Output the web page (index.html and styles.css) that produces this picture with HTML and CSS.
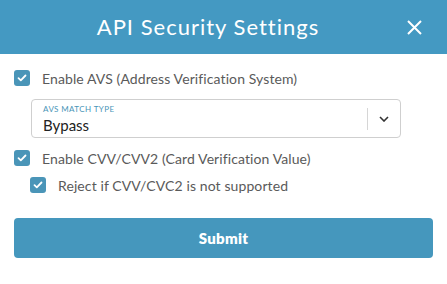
FILE: index.html
```html
<!DOCTYPE html>
<html>
<head>
<meta charset="utf-8">
<link rel="stylesheet" href="styles.css">
</head>
<body>
<div class="modal">
  <div class="header">
    <div class="title">API Security Settings</div>
    <button class="close" aria-label="Close">
      <svg width="15" height="15" viewBox="0 0 15 15"><path d="M1 1L14 14M14 1L1 14" stroke="#fff" stroke-width="2" fill="none"/></svg>
    </button>
  </div>
  <div class="body">
    <label class="check">
      <span class="box"><svg width="10" height="8" viewBox="0 0 10 8"><path d="M1.5 4.2L3.8 6.3L8.5 1.5" stroke="#fff" stroke-width="1.8" fill="none" stroke-linecap="round" stroke-linejoin="round"/></svg></span>
      <span class="label">Enable AVS (Address Verification System)</span>
    </label>
    <div class="select">
      <div class="select-value">
        <div class="select-label">AVS MATCH TYPE</div>
        <div class="select-text">Bypass</div>
      </div>
      <div class="divider"></div>
      <div class="chevron"><svg width="10" height="6" viewBox="0 0 10 6"><path d="M1 1L5 5L9 1" stroke="#333" stroke-width="1.6" fill="none"/></svg></div>
    </div>
    <label class="check">
      <span class="box"><svg width="10" height="8" viewBox="0 0 10 8"><path d="M1.5 4.2L3.8 6.3L8.5 1.5" stroke="#fff" stroke-width="1.8" fill="none" stroke-linecap="round" stroke-linejoin="round"/></svg></span>
      <span class="label">Enable CVV/CVV2 (Card Verification Value)</span>
    </label>
    <label class="check sub">
      <span class="box"><svg width="10" height="8" viewBox="0 0 10 8"><path d="M1.5 4.2L3.8 6.3L8.5 1.5" stroke="#fff" stroke-width="1.8" fill="none" stroke-linecap="round" stroke-linejoin="round"/></svg></span>
      <span class="label">Reject if CVV/CVC2 is not supported</span>
    </label>
    <button class="submit">Submit</button>
  </div>
</div>
</body>
</html>
```
FILE: styles.css
```css
* { box-sizing: border-box; }
html, body { margin: 0; padding: 0; background: #fff; }
body { font-family: "Lato", "Noto Sans", sans-serif; color: #555; }
.modal { width: 447px; }
.header {
  height: 54px;
  background: #4499c2;
  display: flex;
  align-items: center;
  padding: 0 25px 0 14px;
}
.title {
  flex: 1;
  text-align: center;
  color: #fff;
  font-size: 22px;
  letter-spacing: 1px;
  padding-bottom: 1px;
}
.close {
  width: 20px;
  height: 30px;
  border: 0;
  background: none;
  padding: 0;
  display: flex;
  align-items: center;
  justify-content: flex-end;
}
.body { padding: 16px 14px 0 14px; display: flex; flex-direction: column; }
.check { display: flex; align-items: center; gap: 12px; height: 16px; }
.check.sub { margin-left: 16px; margin-top: 11px; }
.box {
  width: 16px; height: 16px; border-radius: 3px;
  background: #4a95b8;
  display: flex; align-items: center; justify-content: center;
}
.label { font-size: 14px; color: #5a5a5a; letter-spacing: 0.1px; }
.select {
  margin: 13px 32px 12px 17px;
  height: 39px;
  border: 1px solid #cfcfcf;
  border-radius: 4px;
  display: flex;
  align-items: center;
}
.select-value { flex: 1; padding-left: 11px; padding-top: 1px; }
.select-label { font-size: 8px; color: #4a95b8; letter-spacing: 0.4px; line-height: 9px; }
.select-text { font-size: 15px; color: #222; line-height: 18px; margin-top: 2px; }
.divider { width: 1px; height: 22px; background: #d6d6d6; }
.chevron { width: 32px; display: flex; justify-content: center; align-items: center; }
.submit {
  margin-top: 25px;
  height: 40px;
  border: 0;
  border-radius: 4px;
  background: #4597bd;
  color: #fff;
  font-family: "Lato", "Noto Sans", sans-serif;
  font-weight: 800;
  font-size: 15px;
  letter-spacing: 0.3px;
}
```
